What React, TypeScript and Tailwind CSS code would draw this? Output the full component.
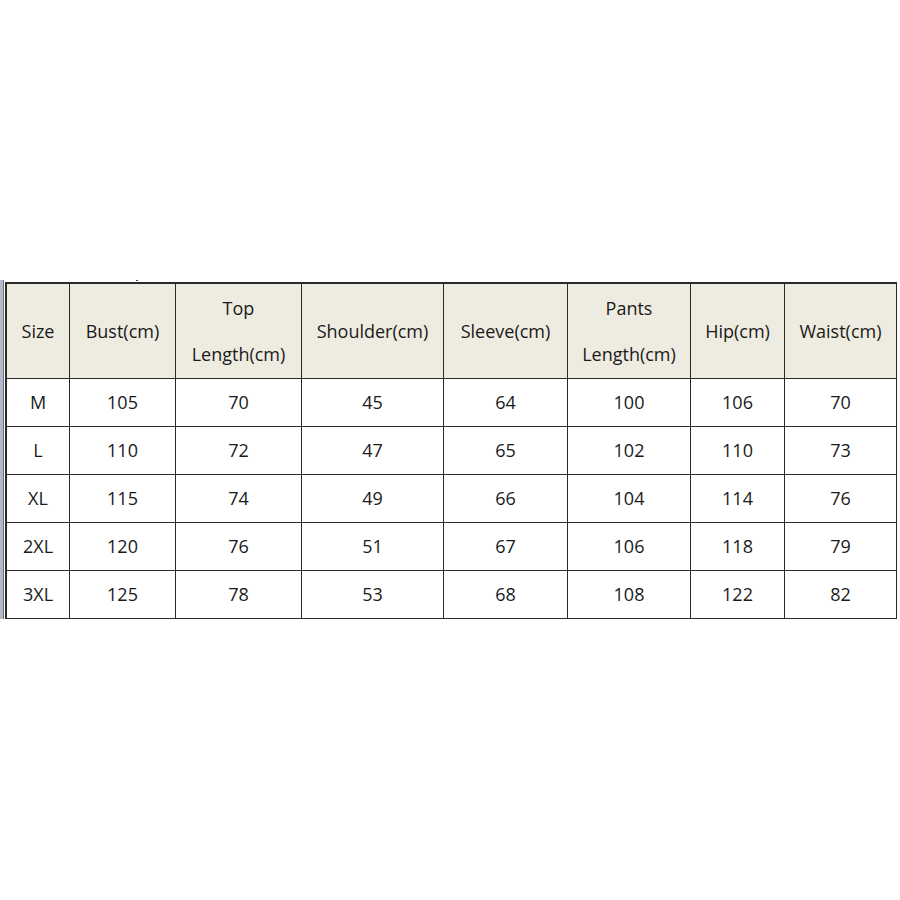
import React from "react";

const headers: React.ReactNode[] = [
  "Size",
  "Bust(cm)",
  <div key="t" className="flex flex-col items-center gap-[19px]"><span>Top</span><span>Length(cm)</span></div>,
  "Shoulder(cm)",
  "Sleeve(cm)",
  <div key="p" className="flex flex-col items-center gap-[19px]"><span>Pants</span><span>Length(cm)</span></div>,
  "Hip(cm)",
  "Waist(cm)",
];

const rows = [
  ["M", "105", "70", "45", "64", "100", "106", "70"],
  ["L", "110", "72", "47", "65", "102", "110", "73"],
  ["XL", "115", "74", "49", "66", "104", "114", "76"],
  ["2XL", "120", "76", "51", "67", "106", "118", "79"],
  ["3XL", "125", "78", "53", "68", "108", "122", "82"],
];

export default function App() {
  return (
    <div
      className="w-[900px] h-[900px] bg-white relative"
      style={{ fontFamily: '"Open Sans", "Noto Sans", sans-serif' }}
    >
      <div className="absolute left-[136px] top-[280px] w-[2px] h-[1px] bg-[#444]" />
      <div className="pt-[282px] flex">
        <div className="flex mt-[-2px] h-[339px]">
          <div className="w-[3px] bg-[#b4b9c8]" />
          <div className="w-[1px] bg-[#6b7080]" />
          <div className="w-[1px] bg-white" />
        </div>
        <div className="grid grid-cols-[63px_106px_126px_142px_124px_123px_94px_112px] grid-rows-[95px_48px_48px_48px_48px_48px] border-t-2 border-l-2 border-[#2a2a2a] text-[18px] text-[#1a1a1a]">
          {headers.map((h, i) => (
            <div
              key={i}
              className={`flex items-center justify-center bg-[#eeebe1] border-b-[1.5px] border-r-[1.5px] border-[#2a2a2a] ${i === 7 ? "border-r-2" : ""}`}
            >
              {h}
            </div>
          ))}
          {rows.map((r, ri) =>
            r.map((c, ci) => (
              <div
                key={ri + "-" + ci}
                className={`flex items-center justify-center border-b-[1.5px] border-r-[1.5px] border-[#2a2a2a] ${ci === 7 ? "border-r-2" : ""} ${ri === 4 ? "border-b-2" : ""}`}
              >
                {c}
              </div>
            ))
          )}
        </div>
      </div>
    </div>
  );
}
